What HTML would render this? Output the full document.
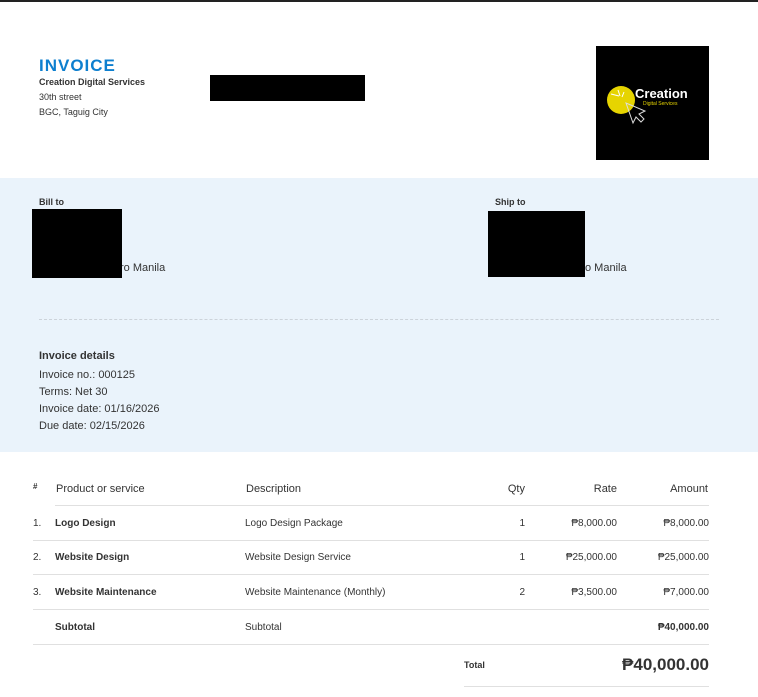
<!DOCTYPE html>
<html><head><meta charset="utf-8"><style>
*{margin:0;padding:0;box-sizing:border-box}
body{width:758px;height:697px;background:#fff;font-family:"Liberation Sans",sans-serif;color:#333;position:relative;overflow:hidden}
.a{position:absolute;white-space:nowrap}
.t{transform:translateY(1px)}
.s{font-size:11px}
.b{font-weight:bold}
.hr{position:absolute;height:1px;background:#e0e0e0}
.r{text-align:right}
</style></head><body>
<div class="a" style="left:0;top:0;width:758px;height:2px;background:#222"></div>
<div class="a b" style="left:39px;top:56px;font-size:17px;color:#0d7fcf;letter-spacing:1px">INVOICE</div>
<div class="a b" style="left:39px;top:77px;font-size:9px">Creation Digital Services</div>
<div class="a" style="left:39px;top:92px;font-size:9px">30th street</div>
<div class="a" style="left:39px;top:107px;font-size:9px">BGC, Taguig City</div>
<div class="a" style="left:210px;top:75px;width:155px;height:26px;background:#000"></div>
<div class="a" style="left:596px;top:46px;width:113px;height:114px;background:#000">
<svg width="113" height="114" viewBox="0 0 113 114">
<circle cx="25" cy="54" r="14" fill="#e6d400"/>
<path d="M15 48l8 2M22 44l2 6M28 46l-2 5" stroke="#fff" stroke-width="1"/>
<path d="M30 57l7 20 3-6 5 5 3-3-5-5 6-3z" fill="none" stroke="#ddd" stroke-width="1"/>
<text x="39" y="52" fill="#fff" font-family="Liberation Sans" font-weight="bold" font-size="13">Creation</text>
<text x="47" y="59" fill="#e6d400" font-family="Liberation Sans" font-size="5">Digital Services</text>
</svg></div>
<div class="a" style="left:0;top:178px;width:758px;height:274px;background:#eaf3fb"></div>
<div class="a b" style="left:39px;top:197px;font-size:9px">Bill to</div>
<div class="a" style="left:120px;top:262px;font-size:11px">ro Manila</div>
<div class="a" style="left:32px;top:209px;width:90px;height:69px;background:#000"></div>
<div class="a b" style="left:495px;top:197px;font-size:9px">Ship to</div>
<div class="a" style="left:585px;top:262px;font-size:11px">o Manila</div>
<div class="a" style="left:488px;top:211px;width:97px;height:66px;background:#000"></div>
<div class="a" style="left:39px;top:319px;width:680px;border-top:1px dashed #ccd3da"></div>
<div class="a b" style="left:39px;top:350px;font-size:11px">Invoice details</div>
<div class="a s" style="left:39px;top:369px">Invoice no.: 000125</div>
<div class="a s" style="left:39px;top:386px">Terms: Net 30</div>
<div class="a s" style="left:39px;top:403px">Invoice date: 01/16/2026</div>
<div class="a s" style="left:39px;top:420px">Due date: 02/15/2026</div>

<div class="a b" style="left:33px;top:482px;font-size:8px">#</div>
<div class="a s" style="left:56px;top:483px">Product or service</div>
<div class="a s" style="left:246px;top:483px">Description</div>
<div class="a s r" style="left:480px;width:45px;top:483px">Qty</div>
<div class="a s r" style="left:540px;width:77px;top:483px">Rate</div>
<div class="a s r" style="left:620px;width:88px;top:483px">Amount</div>
<div class="hr" style="left:55px;top:505px;width:654px"></div>

<div class="a" style="left:33px;top:518px;font-size:10px">1.</div>
<div class="a b" style="left:55px;top:518px;font-size:10px">Logo Design</div>
<div class="a" style="left:245px;top:518px;font-size:10px">Logo Design Package</div>
<div class="a r" style="left:480px;width:45px;top:518px;font-size:10px">1</div>
<div class="a r" style="left:540px;width:77px;top:518px;font-size:10px">₱8,000.00</div>
<div class="a r" style="left:620px;width:89px;top:518px;font-size:10px">₱8,000.00</div>
<div class="hr" style="left:33px;top:540px;width:676px"></div>

<div class="a" style="left:33px;top:552px;font-size:10px">2.</div>
<div class="a b" style="left:55px;top:552px;font-size:10px">Website Design</div>
<div class="a" style="left:245px;top:552px;font-size:10px">Website Design Service</div>
<div class="a r" style="left:480px;width:45px;top:552px;font-size:10px">1</div>
<div class="a r" style="left:540px;width:77px;top:552px;font-size:10px">₱25,000.00</div>
<div class="a r" style="left:620px;width:89px;top:552px;font-size:10px">₱25,000.00</div>
<div class="hr" style="left:33px;top:574px;width:676px"></div>

<div class="a" style="left:33px;top:587px;font-size:10px">3.</div>
<div class="a b" style="left:55px;top:587px;font-size:10px">Website Maintenance</div>
<div class="a" style="left:245px;top:587px;font-size:10px">Website Maintenance (Monthly)</div>
<div class="a r" style="left:480px;width:45px;top:587px;font-size:10px">2</div>
<div class="a r" style="left:540px;width:77px;top:587px;font-size:10px">₱3,500.00</div>
<div class="a r" style="left:620px;width:89px;top:587px;font-size:10px">₱7,000.00</div>
<div class="hr" style="left:33px;top:609px;width:676px"></div>

<div class="a b" style="left:55px;top:622px;font-size:10px">Subtotal</div>
<div class="a" style="left:245px;top:622px;font-size:10px">Subtotal</div>
<div class="a b r" style="left:620px;width:89px;top:622px;font-size:10px">₱40,000.00</div>
<div class="hr" style="left:33px;top:644px;width:676px"></div>

<div class="a b" style="left:464px;top:660px;font-size:9px">Total</div>
<div class="a b r" style="left:580px;width:129px;top:655px;font-size:17px">₱40,000.00</div>
<div class="hr" style="left:464px;top:686px;width:245px"></div>
</body></html>
